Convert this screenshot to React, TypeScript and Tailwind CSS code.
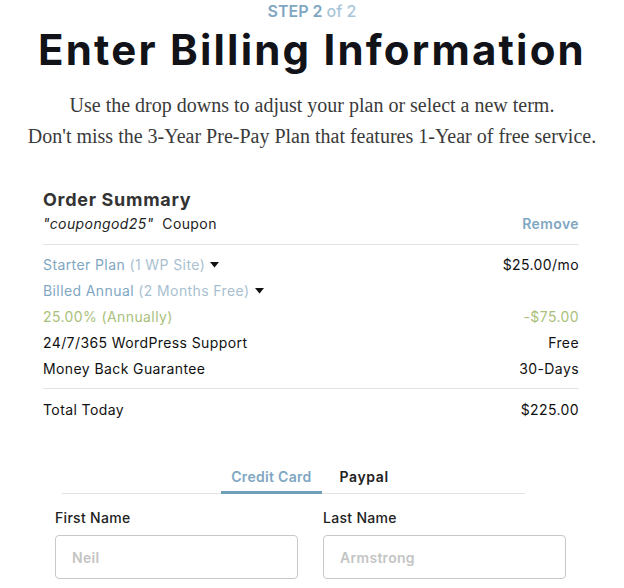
import React from "react";

const sans = { fontFamily: "Inter, 'Noto Sans', sans-serif" };

function Caret() {
  return (
    <svg width="9" height="6" viewBox="0 0 9 6" className="inline-block ml-[5px] mb-[2px]">
      <path d="M0 0 L9 0 L4.5 5.5 Z" fill="#111" />
    </svg>
  );
}

export default function App() {
  return (
    <div className="w-[624px] h-[588px] bg-white overflow-hidden" style={sans}>
      <div className="text-center text-[16px] leading-[22px] font-semibold text-[#7fa7c2]">
        STEP 2 <span className="text-[#a9c5d8] font-medium">of 2</span>
      </div>
      <h1 className="text-center text-[42px] leading-[50px] font-bold text-[#111318] mt-[3px] tracking-[2.2px]">
        Enter Billing Information
      </h1>
      <div
        className="text-center text-[20px] leading-[31px] text-[#3a3a3a] mt-[15px]"
        style={{ fontFamily: "'Liberation Serif', serif" }}
      >
        <div>Use the drop downs to adjust your plan or select a new term.</div>
        <div>Don't miss the 3-Year Pre-Pay Plan that features 1-Year of free service.</div>
      </div>

      <div className="w-[536px] ml-[43px] mt-[36px] tracking-[0.4px]">
        <div className="text-[18px] leading-[24px] font-bold text-[#333] tracking-[0.7px]">Order Summary</div>
        <div className="flex justify-between items-center text-[14px] leading-[24px] text-[#222]">
          <span>
            <span className="italic">"coupongod25"</span>&nbsp; Coupon
          </span>
          <span className="font-semibold text-[#7fa7c2]">Remove</span>
        </div>
        <div className="border-t border-[#e3e3e3] mt-[8px] pt-[7px] text-[14px] leading-[26px]">
          <div className="flex justify-between">
            <span className="text-[#7fa7c2]">
              Starter Plan <span className="text-[#a9bfcf]">(1 WP Site)</span>
              <Caret />
            </span>
            <span className="text-[#111]">$25.00/mo</span>
          </div>
          <div className="flex justify-between">
            <span className="text-[#7fa7c2]">
              Billed Annual <span className="text-[#a9bfcf]">(2 Months Free)</span>
              <Caret />
            </span>
          </div>
          <div className="flex justify-between text-[#a9c07a]">
            <span>25.00% (Annually)</span>
            <span>-$75.00</span>
          </div>
          <div className="flex justify-between text-[#111]">
            <span>24/7/365 WordPress Support</span>
            <span>Free</span>
          </div>
          <div className="flex justify-between text-[#111]">
            <span>Money Back Guarantee</span>
            <span>30-Days</span>
          </div>
        </div>
        <div className="border-t border-[#e3e3e3] mt-[6px] pt-[8px] flex justify-between text-[14px] leading-[26px] text-[#111]">
          <span>Total Today</span>
          <span>$225.00</span>
        </div>
      </div>

      <div className="w-[511px] ml-[55px] mt-[44px] tracking-[0.3px]">
        <div className="ml-[7px] mr-[41px] border-b border-[#e3e3e3] flex justify-center text-[14px] font-semibold pl-[33px]">
          <div className="px-[10px] pb-[4px] border-b-[3px] border-[#6fa0b8] mb-[-1px] text-[#7fa7c2] leading-[20px]">
            Credit Card
          </div>
          <div className="px-[10px] pb-[4px] ml-[8px] text-[#222] leading-[20px] tracking-[0.6px]">Paypal</div>
        </div>
        <div className="grid grid-cols-2 gap-[25px] mt-[13px]">
          <div>
            <div className="text-[14px] font-medium text-[#222] leading-[22px]">First Name</div>
            <div className="mt-[6px] h-[44px] border border-[#c8c8c8] rounded-[4px] flex items-center px-[16px] text-[14px] font-semibold text-[#c4c4c4]">
              Neil
            </div>
          </div>
          <div>
            <div className="text-[14px] font-medium text-[#222] leading-[22px]">Last Name</div>
            <div className="mt-[6px] h-[44px] border border-[#c8c8c8] rounded-[4px] flex items-center px-[16px] text-[14px] font-semibold text-[#c4c4c4]">
              Armstrong
            </div>
          </div>
        </div>
      </div>
    </div>
  );
}
